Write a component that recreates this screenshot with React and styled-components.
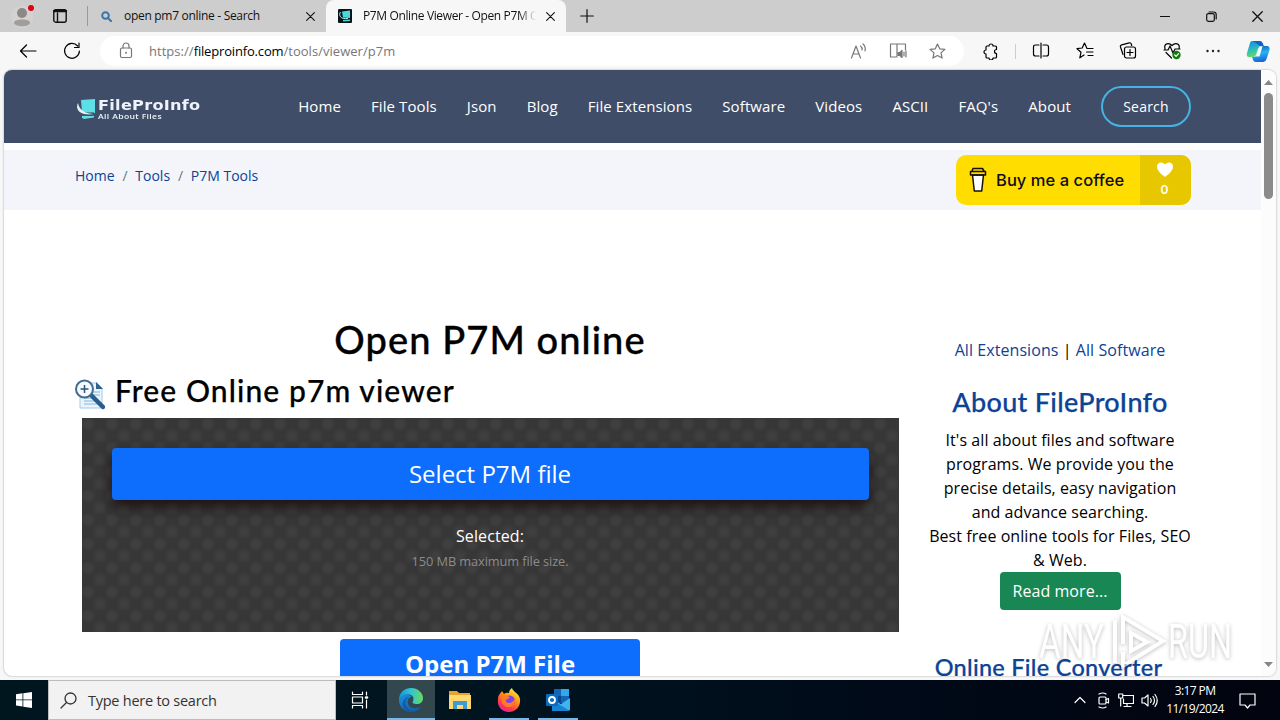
import React from "react";
import styled, { createGlobalStyle } from "styled-components";

const GlobalStyle = createGlobalStyle`
  * {
    box-sizing: border-box;
  }
  body {
    margin: 0;
    overflow: hidden;
    font-family: "Open Sans", sans-serif;
  }
  a {
    color: inherit;
    text-decoration: none;
  }
  h1, h2, h3, p {
    margin: 0;
    font-weight: 500;
  }
  svg {
    display: block;
    flex: none;
  }
`;

const Desktop = styled.div`
  position: relative;
  width: 1280px;
  height: 720px;
  display: flex;
  flex-direction: column;
  overflow: hidden;
  background: #f7f7f7;
`;

/* browser chrome */
const TabStrip = styled.div`
  display: flex;
  height: 32px;
  background: #cdcdcd;
  font: 12px/32px "Open Sans", sans-serif;
  color: #111;
`;
const ProfileArea = styled.div`
  width: 88px;
  display: flex;
  align-items: center;
  padding-left: 11px;
  gap: 16px;
  border-right: 1px solid #999;
  height: 20px;
  margin-top: 6px;
`;
const Tab = styled.div`
  width: ${(p) => p.$width}px;
  height: 32px;
  display: flex;
  align-items: center;
  padding: 0 11px 0 ${(p) => p.$left}px;
  border-radius: 8px 8px 0 0;
  background: ${(p) => (p.$active ? "#f7f7f7" : "transparent")};
`;
const TabTitle = styled.span`
  flex: 1;
  margin-left: ${(p) => p.$left}px;
  white-space: nowrap;
  overflow: hidden;
  letter-spacing: ${(p) => p.$spacing}px;
  ${(p) =>
    p.$fade &&
    "-webkit-mask-image: linear-gradient(90deg, #000 90%, transparent); margin-right: 10px;"}
`;
const NewTab = styled.div`
  flex: 1;
  padding: 9px 0 0 14px;
`;
const WindowButtons = styled.div`
  display: flex;
  align-items: center;
  gap: 35px;
  padding-right: 17px;
`;
const Toolbar = styled.div`
  height: 38px;
  display: flex;
  align-items: center;
  padding: 0 10px 0 19px;
`;
const NavButtons = styled.div`
  display: flex;
  gap: 26px;
  width: 81px;
`;
const AddressBar = styled.div`
  width: 864px;
  height: 30px;
  border-radius: 15px;
  background: #fff;
  display: flex;
  align-items: center;
  padding: 0 18px 0 17px;
  color: #777;
`;
const Url = styled.span`
  flex: 1;
  margin-left: 14px;
  font: 13px/30px "Open Sans", sans-serif;
  letter-spacing: 0.04px;
  b {
    font-weight: 400;
    color: #000;
    letter-spacing: -0.17px;
  }
`;
const AddressIcons = styled.div`
  display: flex;
  align-items: center;
  gap: 22px;
`;
const ToolIcons = styled.div`
  flex: 1;
  display: flex;
  align-items: center;
  justify-content: space-between;
  padding-left: 18px;
`;
const Divider = styled.i`
  width: 1px;
  height: 15px;
  background: #ccc;
  margin: 0 -9px 0 -10px;
`;

/* web page */
const Viewport = styled.div`
  height: 606px;
  margin: 0 4px;
  display: flex;
  border-radius: 8px;
  overflow: hidden;
  background: #fff;
  box-shadow: 0 0 2px rgba(0, 0, 0, 0.4);
`;
const Page = styled.div`
  width: 1257px;
  overflow: hidden;
`;
const ScrollBar = styled.div`
  width: 15px;
  background: #fcfcfc;
  display: flex;
  flex-direction: column;
  align-items: center;
  padding: 10px 0 9px;
`;
const Thumb = styled.div`
  width: 9px;
  height: 106px;
  border-radius: 5px;
  background: #8b8b8b;
  margin: 8px 0 auto;
`;
const Header = styled.header`
  height: 73px;
  background: #3f4d68;
  color: #fff;
  display: flex;
  align-items: center;
  justify-content: space-between;
  padding: 0 70px 0 72px;
`;
const Brand = styled.div`
  display: flex;
  align-items: center;
  padding-top: 5px;
`;
const BrandText = styled.div`
  margin-left: 2px;
  font: 700 14px/14px "DejaVu Sans", sans-serif;
  color: #eef2fa;
  letter-spacing: 0.25px;
  transform: scaleX(1.15);
  transform-origin: 0 50%;
  small {
    display: block;
    font: 600 7.5px/8px "Open Sans", sans-serif;
    letter-spacing: 0.3px;
  }
`;
const Menu = styled.nav`
  display: flex;
  align-items: center;
  gap: 30px;
  font-size: 15px;
  font-weight: 500;
  letter-spacing: 0.1px;
`;
const MenuLink = styled.a`
  padding-bottom: 1px;
`;
const SearchPill = styled.a`
  width: 90px;
  height: 41px;
  border: 2px solid #47b2e4;
  border-radius: 21px;
  font-size: 14px;
  line-height: 37px;
  letter-spacing: 0.2px;
  text-align: center;
`;
const Crumbs = styled.div`
  height: 60px;
  margin-top: 7px;
  padding: 5px 70px 0 71px;
  background: #f3f5fa;
  display: flex;
  justify-content: space-between;
  font-size: 14px;
  line-height: 42px;
  color: #0c4396;
  i {
    color: #6c757d;
    font-style: normal;
    margin: 0 7.8px;
  }
`;
const Coffee = styled.a`
  width: 235px;
  height: 50px;
  border-radius: 10px;
  overflow: hidden;
  display: flex;
  align-items: center;
  background: #ffdd00;
  padding-left: 13px;
  color: #0d0c22;
  font: 500 16.5px/50px Inter, sans-serif;
`;
const CoffeeLabel = styled.span`
  flex: 1;
  margin-left: 9px;
  white-space: nowrap;
  letter-spacing: 0.05px;
`;
const CoffeeCount = styled.span`
  width: 51px;
  height: 50px;
  background: #e6c700;
  color: #fff;
  display: flex;
  flex-direction: column;
  align-items: center;
  padding: 6px 2px 0 0;
  font: 600 12px/24px Inter, sans-serif;
`;
const Columns = styled.div`
  display: flex;
  padding: 105px 46px 0 71px;
`;
const Main = styled.main`
  width: 830px;
  flex: none;
  display: flex;
  flex-direction: column;
  align-items: center;
`;
const Title = styled.h1`
  font: 500 38px/48px Lato, sans-serif;
  letter-spacing: 1.08px;
  margin-bottom: 2px;
  -webkit-text-stroke: 0.35px #000;
`;
const SubTitle = styled.h2`
  align-self: stretch;
  height: 53px;
  display: flex;
  align-items: center;
  gap: 10px;
  padding-bottom: 3px;
  font: 500 30px/50px Lato, sans-serif;
  letter-spacing: 1.1px;
  -webkit-text-stroke: 0.25px #000;
`;
const DropZone = styled.section`
  width: 817px;
  height: 214px;
  flex: none;
  padding: 30px;
  text-align: center;
  color: #fff;
  background-color: #373737;
  background-image: radial-gradient(circle at 6px 6px, #3f3f3f 3px, transparent 8px),
    radial-gradient(circle at 18px 18px, #3f3f3f 3px, transparent 8px);
  background-size: 24px 24px;
  p {
    font-size: 16px;
    font-weight: 400;
    line-height: 24px;
    letter-spacing: 0.1px;
    margin-top: 24px;
  }
  small {
    font-size: 12.8px;
    line-height: 26px;
    letter-spacing: -0.1px;
    color: #8c8c8c;
  }
`;
const SelectButton = styled.div`
  height: 52px;
  border-radius: 4px;
  background: #0d6efd;
  font-size: 24px;
  line-height: 52px;
  box-shadow: 0 7px 14px rgba(20, 0, 0, 0.7);
`;
const OpenButton = styled.div`
  width: 300px;
  height: 52px;
  margin-top: 7px;
  border-radius: 4px;
  background: #0d6efd;
  color: #fff;
  font-size: 24px;
  font-weight: 700;
  line-height: 50px;
  text-align: center;
`;
const Aside = styled.aside`
  width: 310px;
  padding: 23px 0 0;
  display: flex;
  flex-direction: column;
  align-items: center;
  text-align: center;
  font-size: 16px;
  line-height: 24px;
  letter-spacing: 0.07px;
  a {
    color: #0c4396;
  }
  p {
    width: 264px;
    font-weight: 400;
    white-space: nowrap;
    margin-top: 6px;
  }
`;
const AsideTitle = styled.h3`
  margin: ${(p) => p.$margin};
  font: 500 ${(p) => p.$size}px/40px Lato, sans-serif;
  letter-spacing: ${(p) => p.$spacing}px;
  color: #0c4396;
  white-space: nowrap;
  -webkit-text-stroke: 0.25px #0c4396;
`;
const ReadMore = styled.div`
  width: 121px;
  height: 38px;
  flex: none;
  border-radius: 4px;
  background: #198754;
  color: #fff;
  line-height: 38px;
`;

/* taskbar */
const Taskbar = styled.div`
  height: 40px;
  margin-top: 4px;
  display: flex;
  background: linear-gradient(90deg, #00161f, #001420 40%, #000a18 70%, #02040f);
  color: #fff;
`;
const TaskButton = styled.div`
  width: 48px;
  margin-right: ${(p) => p.$gap || 0}px;
  display: flex;
  align-items: center;
  justify-content: center;
  background: linear-gradient(#76b9ed, #76b9ed) 50% 100% / ${(p) => p.$bar || 0}px 2px no-repeat
    ${(p) => (p.$active ? "#33484e" : "transparent")};
`;
const TaskSearch = styled.div`
  width: 288px;
  border: 1px solid #bdbdbd;
  background: #f2f2f2;
  color: #333;
  display: flex;
  align-items: center;
  gap: 11px;
  padding-left: 11px;
  font-size: 14.5px;
  letter-spacing: -0.25px;
`;
const Tray = styled.div`
  margin-left: auto;
  display: flex;
  align-items: center;
  gap: 7px;
  padding-right: 24px;
`;
const Clock = styled.div`
  width: 60px;
  margin-right: 7px;
  font-size: 12px;
  line-height: 18px;
  letter-spacing: -0.6px;
  text-align: center;
  white-space: nowrap;
  padding-bottom: 1px;
`;

/* translucent mark in the corner of the screen */
const Watermark = styled.div`
  position: absolute;
  left: 1039px;
  top: 609px;
  display: flex;
  align-items: center;
  width: 194px;
  height: 66px;
  opacity: 0.6;
  filter: drop-shadow(0 1px 2px rgba(0, 0, 0, 0.45));
`;
const MarkText = styled.span`
  width: ${(p) => p.$width}px;
  color: #fff;
  font: 400 49px/66px Roboto, sans-serif;
  transform: scaleX(${(p) => p.$scale});
  transform-origin: 0 50%;
`;

const Icon = ({ w = 18, h = w, box, color = "currentColor", sw = 1.2, children }) => (
  <svg
    width={w}
    height={h}
    viewBox={box || `0 0 ${w} ${h}`}
    fill="none"
    stroke={color}
    strokeWidth={sw}
    strokeLinecap="round"
    strokeLinejoin="round"
  >
    {children}
  </svg>
);

const Cross = ({ size = 9 }) => (
  <Icon w={size} box="0 0 10 10">
    <path d="M.7.7l8.6 8.6M9.3.7L.7 9.3" />
  </Icon>
);

const starPath = "M8.5 1l2.2 4.8 5.2.6-3.9 3.5 1.1 5.2-4.6-2.6-4.6 2.6 1.1-5.2L1.1 6.4l5.2-.6z";

const menuItems = [
  "Home",
  "File Tools",
  "Json",
  "Blog",
  "File Extensions",
  "Software",
  "Videos",
  "ASCII",
  "FAQ's",
  "About",
];

const BrowserTabs = () => (
  <TabStrip>
    <ProfileArea>
      <svg width="26" height="26" viewBox="0 0 26 26">
        <circle cx="11" cy="14" r="11" fill="#d4d2d1" />
        <circle cx="11" cy="10" r="5" fill="#8b8886" />
        <path d="M3 19.500c0-4 16-4 16 0 0 5-16 5-16 0z" fill="#a09d9b" />
        <circle cx="20" cy="5" r="3" fill="#e00010" />
      </svg>
      <Icon w={14} sw={1.4}>
        <rect x=".8" y=".8" width="12.400" height="12.400" rx="2" />
        <path d="M4.500 4v9" />
        <path d="M1 2h12" strokeWidth="2.500" />
      </Icon>
    </ProfileArea>
    <Tab $width={238} $left={13}>
      <Icon w={11} sw={2} color="#3a76ad">
        <circle cx="4.500" cy="4.500" r="3.300" />
        <path d="M7.200 7.200l3 3" />
      </Icon>
      <TabTitle $left={12} $spacing={-0.3}>
        open pm7 online - Search
      </TabTitle>
      <Cross />
    </Tab>
    <Tab $active $width={240} $left={12}>
      <svg width="14" height="14" viewBox="0 0 14 14">
        <rect width="14" height="14" rx="1" fill="#07151b" />
        <path d="M4 2.500l8-1V9l-7-.5zM5 11l7-.5v1.500l-7 .5z" fill="#49d8dc" />
        <path d="M2.500 3C.5 6 2 10.500 10 9.500" fill="none" stroke="#b5f3f3" />
      </svg>
      <TabTitle $left={11} $spacing={-0.37} $fade>
        P7M Online Viewer - Open P7M Online
      </TabTitle>
      <Cross />
    </Tab>
    <NewTab>
      <Icon w={14}>
        <path d="M7 .7v12.600M.7 7h12.600" />
      </Icon>
    </NewTab>
    <WindowButtons>
      <Icon w={11}>
        <path d="M.5 5.500h9" />
      </Icon>
      <Icon w={11}>
        <rect x=".7" y="2.700" width="7.600" height="7.600" rx="1.500" />
        <path d="M3 1h4.500q2.700 0 2.700 2.700V8" />
      </Icon>
      <Cross size={11} />
    </WindowButtons>
  </TabStrip>
);

const BrowserToolbar = () => (
  <Toolbar>
    <NavButtons>
      <Icon w={18}>
        <path d="M17 9H2M7.500 3L1.500 9l6 6" />
      </Icon>
      <Icon w={18}>
        <path d="M14.600 4A7.400 7.400 0 1 0 16.400 9M16 1v4.500h-4.500" />
      </Icon>
    </NavButtons>
    <AddressBar>
      <Icon w={18}>
        <rect x="3.500" y="6" width="11" height="9.500" rx="1.500" />
        <path d="M6 6V4a3 3 0 0 1 6 0v2" />
        <circle cx="9" cy="10.800" r=".4" />
      </Icon>
      <Url>
        https://<b>fileproinfo.com</b>/tools/viewer/p7m
      </Url>
      <AddressIcons>
        <Icon w={17}>
          <path d="M1.500 15L6 3l4.500 12M3 11h6M10.500 3q2 1.500 1.500 4M13 1q3 2.500 2 7" />
        </Icon>
        <Icon w={18}>
          <path d="M8 15H1.500V2H8v12M8 2h8.500v6" />
          <path d="M9 10.500h2l2-2v7l-2-2H9z" fill="currentColor" />
          <path d="M15 10v4M17 9v6" />
        </Icon>
        <Icon w={17}>
          <path d={starPath} />
        </Icon>
      </AddressIcons>
    </AddressBar>
    <ToolIcons>
      <Icon w={17}>
        <path d="M4 4q0-1 1-1h2a2 2 0 0 1 4 0h2.500q1 0 1 1v2.500a1.600 1.600 0 0 0 0 4V14q0 1-1 1H11a2 2 0 0 1-4 0H5q-1 0-1-1v-3a2 2 0 0 1 0-4z" />
      </Icon>
      <Divider />
      <Icon w={18}>
        <path d="M7 3H3.500Q1.500 3 1.500 5v7q0 2 2 2H7M11 3h3.500q2 0 2 2v7q0 2-2 2H11M9 1v15" />
      </Icon>
      <Icon w={18}>
        <path d="M11 6.500L8.500 1 6.200 6 1 6.700l4 3.600-1.200 5.500L8 13M11.500 6.500H17M10.500 10H17M12 13.500h5" />
      </Icon>
      <Icon w={18}>
        <path d="M4 12.500L1.500 5q-.5-1.700 1.200-2.200l7.600-2q1.500-.3 2 1.200l.4 1.500" />
        <rect x="5.500" y="5" width="11" height="11" rx="2" />
        <path d="M11 7.500v6M8 10.500h6" />
      </Icon>
      <Icon w={18}>
        <path d="M2 7C.5 1 6 .5 9 3.500 12 .5 17.500 1 16 7M1 8h4l2-4 3 7 2-4h5M3 10.500L8.500 16" />
        <circle cx="13.500" cy="13" r="4.200" fill="#107c10" stroke="none" />
        <path d="M11.700 13l1.400 1.300 2.400-2.600" stroke="#fff" />
      </Icon>
      <svg width="14" height="4" viewBox="0 0 14 4" fill="#222">
        <circle cx="1.500" cy="2" r="1.200" />
        <circle cx="7" cy="2" r="1.200" />
        <circle cx="12.500" cy="2" r="1.200" />
      </svg>
      <svg width="24" height="23" viewBox="0 0 24 23">
        <defs>
          <linearGradient id="copilotA" x2=".3" y2="1">
            <stop offset="0" stopColor="#1687df" />
            <stop offset=".5" stopColor="#22b7c8" />
            <stop offset="1" stopColor="#67d96b" />
          </linearGradient>
          <linearGradient id="copilotB" x2=".2" y2="1">
            <stop offset="0" stopColor="#0b4fc0" />
            <stop offset=".5" stopColor="#27b5ed" />
            <stop offset="1" stopColor="#1c67df" />
          </linearGradient>
        </defs>
        <path d="M6 1h8q2 0 3 3l.6 2H15q-2 0-3 3l-2 6q-1 2-3 2H3q-3 0-2-4L4 3q.5-2 2-2z" fill="url(#copilotA)" />
        <path d="M18 6h3q3 0 2.500 4l-3 9q-1 3-3 3H10q-3 0-3.500-4L6 17h2q2 0 3-2l2.500-6Q14.500 6 18 6z" fill="url(#copilotB)" />
        <path d="M7 1h7q2 0 3 3l.6 2H14z" fill="#1260c9" />
        <path d="M14 6.500h2.500l-3 10H10z" fill="#f4faff" />
      </svg>
    </ToolIcons>
  </Toolbar>
);

const SiteHeader = () => (
  <Header>
    <Brand>
      <svg width="20" height="22" viewBox="0 0 20 22">
        <path d="M5 2l14-1v14q-7 2-13-1zM6 18l12-1.500v3L8 21l-2-1z" fill="#5ce0e6" />
        <path d="M2.500 5C-1 11 3 18 18 16" fill="none" stroke="#3f4d68" strokeWidth="3.500" />
        <path d="M2 5C-1.500 12 5 18 18 16 10 15.500 3.500 13 2 5z" fill="#e8edf5" />
      </svg>
      <BrandText>
        FileProInfo
        <small>All About Files</small>
      </BrandText>
    </Brand>
    <Menu>
      {menuItems.map((item) => (
        <MenuLink key={item}>{item}</MenuLink>
      ))}
      <SearchPill>Search</SearchPill>
    </Menu>
  </Header>
);

const CoffeeButton = () => (
  <Coffee>
    <Icon w={18} h={26} sw={1.5} color="#171009">
      <path d="M3.500 8l1.800 16h7.400l1.800-16z" fill="#fff" />
      <path d="M1.500 4.500h15V8h-15zM3 4l1-2.500h9.500L15 4" />
    </Icon>
    <CoffeeLabel>Buy me a coffee</CoffeeLabel>
    <CoffeeCount>
      <svg width="18" height="17" viewBox="0 0 18 17">
        <path d="M9 16C5 13 1 9.500 1 5.500 1 1 6.500 0 9 3.500 11.500 0 17 1 17 5.500 17 9.500 13 13 9 16z" fill="#fff" />
      </svg>
      0
    </CoffeeCount>
  </Coffee>
);

const ViewerIcon = () => (
  <svg width="30" height="31" viewBox="0 0 30 31">
    <path d="M5 4h17l5 5v20H5z" fill="#e9f4fc" stroke="#a5cae4" />
    <path d="M21 3v7h7z" fill="#2d6391" />
    <path d="M9 19h8M9 22h12M9 25h14M18 13h7M18 16h7" stroke="#86b4d7" />
    <path d="M17 17l11 11" stroke="#285d8f" strokeWidth="4.500" strokeLinecap="round" />
    <circle cx="9.500" cy="10" r="8.500" fill="#f4faff" stroke="#416b8f" strokeWidth="2" />
    <path d="M9.500 6v8M5.500 10h8" stroke="#31516f" strokeWidth="1.500" />
  </svg>
);

const ViewerIconSlot = styled.span`
  padding-top: 9px;
`;

const WebPage = () => (
  <Page>
    <SiteHeader />
    <Crumbs>
      <div>
        <a>Home</a>
        <i>/</i>
        <a>Tools</a>
        <i>/</i>
        <a>P7M Tools</a>
      </div>
      <CoffeeButton />
    </Crumbs>
    <Columns>
      <Main>
        <Title>Open P7M online</Title>
        <SubTitle>
          <ViewerIconSlot>
            <ViewerIcon />
          </ViewerIconSlot>
          Free Online p7m viewer
        </SubTitle>
        <DropZone>
          <SelectButton>Select P7M file</SelectButton>
          <p>Selected:</p>
          <small>150 MB maximum file size.</small>
        </DropZone>
        <OpenButton>Open P7M File</OpenButton>
      </Main>
      <Aside>
        <div>
          <a>All Extensions</a> | <a>All Software</a>
        </div>
        <AsideTitle $margin="20px 0 0" $size={27} $spacing={0.32}>
          About FileProInfo
        </AsideTitle>
        <p>
          It's all about files and software
          <br />
          programs. We provide you the
          <br />
          precise details, easy navigation
          <br />
          and advance searching.
          <br />
          Best free online tools for Files, SEO
          <br />
          &amp; Web.
        </p>
        <ReadMore>Read more...</ReadMore>
        <AsideTitle $margin="37px 23px 0 0" $size={23.5} $spacing={0.28}>
          Online File Converter
        </AsideTitle>
      </Aside>
    </Columns>
  </Page>
);

const EdgeLogo = () => (
  <svg width="24" height="24" viewBox="0 0 24 24">
    <defs>
      <linearGradient id="edgeTop" x1="0" x2="1">
        <stop offset="0" stopColor="#1597da" />
        <stop offset=".5" stopColor="#30c5d5" />
        <stop offset="1" stopColor="#6adb59" />
      </linearGradient>
      <linearGradient id="edgeLow" x2=".6" y2="1">
        <stop offset="0" stopColor="#1a94db" />
        <stop offset="1" stopColor="#1260ac" />
      </linearGradient>
    </defs>
    <path d="M0 12C0 4 6 0 12 0c7 0 12 5 12 10 0 4-3 6-6 6-4 0-5-1-4-3C17 6 6 3 0 12z" fill="url(#edgeTop)" />
    <path d="M0 12C1 6 9 4 13 9c-6 0-6 10 1 11 4 1 6-1 8-1-7 9-22 5-22-7z" fill="url(#edgeLow)" />
    <path d="M10 9c-6 3-4 13 5 14-8 2-13-4-11-9 1-3 3-5 6-5z" fill="#114f9d" opacity=".65" />
  </svg>
);

const FirefoxLogo = () => (
  <svg width="24" height="24" viewBox="0 0 24 24">
    <defs>
      <linearGradient id="foxFire" x1=".8" y1="0" x2=".25" y2="1">
        <stop offset="0" stopColor="#fff44f" />
        <stop offset=".4" stopColor="#ff980e" />
        <stop offset=".75" stopColor="#ff3750" />
        <stop offset="1" stopColor="#ed20a0" />
      </linearGradient>
    </defs>
    <path d="M5 3l2 3q2-2 5-1c0-3 2-4 3-5 1 4 7 5 8 11 1 8-5 13-11 13C4 24 0 18 1 11c0-4 2-5 4-8z" fill="url(#foxFire)" />
    <circle cx="12.500" cy="13" r="5.500" fill="#7c43e6" />
    <path d="M4 9q4-3 9 0l-2 2c-3 0-3 4 1 4 3 0 4-2 6-4 1 9-9 11-13 4z" fill="#ff7a23" />
  </svg>
);

const BottomBar = () => (
  <Taskbar>
    <TaskButton>
      <svg width="16" height="16" viewBox="0 0 16 16" fill="#fff">
        <path d="M0 2.200l6.500-.9v6.200H0zM7.300 1.200L16 0v7.500H7.300zM0 8.300h6.500v6.200L0 13.600zM7.300 8.300H16V16l-8.700-1.300z" />
      </svg>
    </TaskButton>
    <TaskSearch>
      <Icon w={17} sw={1.3}>
        <circle cx="10.500" cy="6.500" r="5.500" />
        <path d="M6.500 10.500L1 16" />
      </Icon>
      Type here to search
    </TaskSearch>
    <TaskButton $gap={3}>
      <Icon w={18} color="#fff" sw={1.2}>
        <path d="M1.500 1v2.500h10V1M1.500 17v-2.500h10V17M1.500 6h10v6h-10zM15.500 1v3M15.500 9v8" />
        <path d="M15 6.500h1" strokeWidth="2.500" />
      </Icon>
    </TaskButton>
    <TaskButton $active $bar={48} $gap={1}>
      <EdgeLogo />
    </TaskButton>
    <TaskButton $gap={1}>
      <svg width="22" height="20" viewBox="0 0 22 20">
        <path d="M0 1h8l2 2h11v16H0z" fill="#e5a52d" />
        <path d="M0 5h22v14H0z" fill="#ffd96d" />
        <path d="M4 19v-8h14v8h-4v-4H8v4z" fill="#3d9bd8" />
      </svg>
    </TaskButton>
    <TaskButton $bar={40} $gap={1}>
      <FirefoxLogo />
    </TaskButton>
    <TaskButton $bar={40}>
      <svg width="25" height="22" viewBox="0 0 25 22">
        <path d="M8 0h15v14H8z" fill="#1066b5" />
        <path d="M15 0h8v7h-8z" fill="#32a8e8" />
        <path d="M8 7h7v7H8z" fill="#0a4590" />
        <path d="M6 10l9 5 9-6v12H6z" fill="#41b3ed" />
        <path d="M6 11l18 11H6z" fill="#1684d4" />
        <rect y="5" width="12" height="12" rx="1" fill="#0b6cbd" />
        <circle cx="6" cy="11" r="3" fill="none" stroke="#fff" strokeWidth="1.800" />
      </svg>
    </TaskButton>
    <Tray>
      <Icon w={14} color="#fff">
        <path d="M2 9.500l5-5 5 5" />
      </Icon>
      <Icon w={17} color="#fff">
        <rect x="5" y="5" width="7" height="7" rx="1" />
        <path d="M12 7.500l2.500-1v4.500L12 10M5 2q4-2 7 0M5 15q4 2 7 0" />
      </Icon>
      <Icon w={16} color="#fff">
        <path d="M5 3.500h10.500v8H5.500V7M9 11.500v3M6 14.500h7M.7 2h4v4h-4zM2.700 6v8" />
      </Icon>
      <Icon w={17} color="#fff">
        <path d="M1 6h2.500L7 3v11l-3.500-3H1zM9.500 6.500q1.500 2 0 4M12 4.500q3 4 0 8M14 2.500q4.500 6 0 12" />
      </Icon>
      <Clock>
        3:17 PM
        <br />
        11/19/2024
      </Clock>
      <Icon w={17} color="#fff">
        <path d="M1 2h15v11h-5l-2.500 3L6 13H1z" />
      </Icon>
    </Tray>
  </Taskbar>
);

const App = () => (
  <>
    <GlobalStyle />
    <Desktop>
      <BrowserTabs />
      <BrowserToolbar />
      <Viewport>
        <WebPage />
        <ScrollBar>
          <svg width="9" height="5" viewBox="0 0 9 5">
            <path d="M4.500 0L9 5H0z" fill="#858585" />
          </svg>
          <Thumb />
          <svg width="9" height="5" viewBox="0 0 9 5">
            <path d="M4.500 5L9 0H0z" fill="#858585" />
          </svg>
        </ScrollBar>
      </Viewport>
      <BottomBar />
      <Watermark>
        <MarkText $width={72} $scale={0.68}>
          ANY
        </MarkText>
        <svg width="57" height="60" viewBox="0 0 57 60" fill="none" stroke="#fff" strokeWidth="4">
          <path d="M4 8v43M12 32V5l40 24-40 25V40M20 21l16 9-16 9z" />
        </svg>
        <MarkText $width={66} $scale={0.66}>
          RUN
        </MarkText>
      </Watermark>
    </Desktop>
  </>
);

export default App;
